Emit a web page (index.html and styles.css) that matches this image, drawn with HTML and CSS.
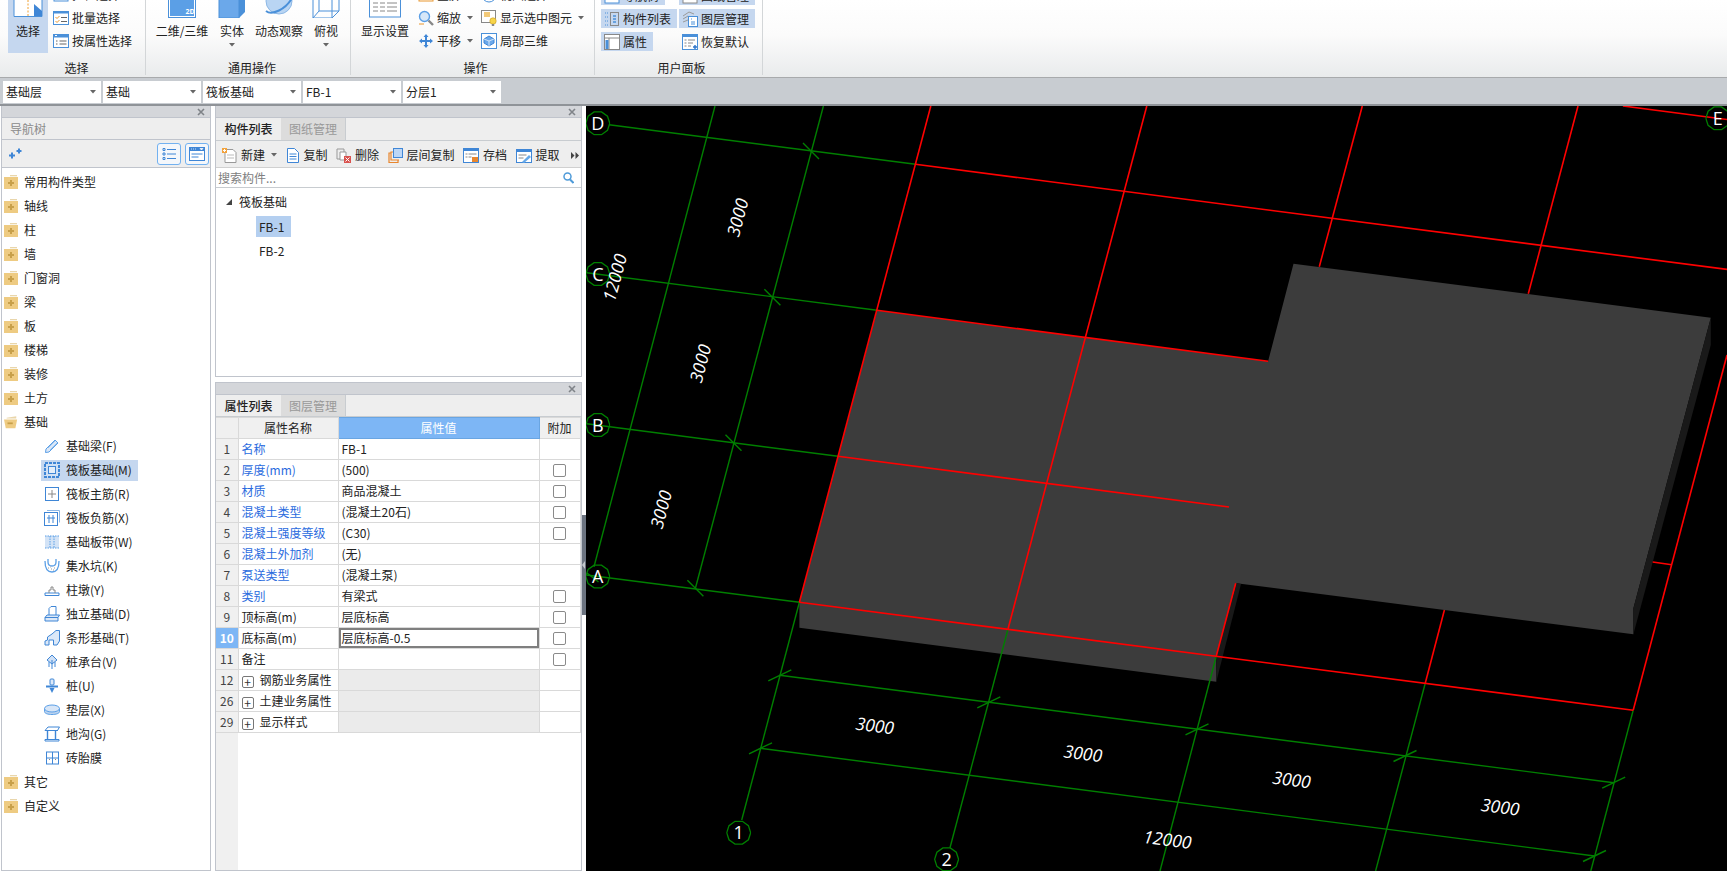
FILE: index.html
```html
<!DOCTYPE html>
<html lang="zh-CN">
<head>
<meta charset="utf-8">
<title>筏板基础</title>
<link rel="stylesheet" href="styles.css">
</head>
<body>
<svg class="defs" width="0" height="0" aria-hidden="true">
  <symbol id="folder" viewBox="0 0 14 14"><rect x="6" y="0" width="7" height="1.3" fill="#e9d6ab"/><rect x="0" y="2" width="14" height="12" fill="#eecb82"/><rect x="6" y="5" width="2" height="6" fill="#c8a04a"/><rect x="4" y="7" width="6" height="2" fill="#c8a04a"/></symbol>
  <symbol id="folder-open" viewBox="0 0 16 14"><path d="M3 2L14 0.5V3H3z" fill="#e9d6ab"/><path d="M0 4H15L13 14H2z" fill="#eecb82"/><rect x="4" y="7.5" width="6" height="2" fill="#c8a04a"/></symbol>
  <symbol id="x" viewBox="0 0 8 8"><path d="M1 1L7 7M7 1L1 7" stroke="#7f8388" stroke-width="1.6" fill="none"/></symbol>
  <symbol id="bubble" viewBox="-12.5 -12.5 25 25"><polygon points="12,0 9.7,7.1 3.7,11.4 -3.7,11.4 -9.7,7.1 -12,0 -9.7,-7.1 -3.7,-11.4 3.7,-11.4 9.7,-7.1" fill="none" stroke="#007f00" stroke-width="1.3"/></symbol>
  <symbol id="caret" viewBox="0 0 6 4"><path d="M0 0H6L3 3.5z" fill="#666"/></symbol>
</svg>
<div class="app">
  <header class="ribbon">
    <section class="group g1">
      <div class="group-body">
        <div class="big big-active w40">
          <svg class="big-icon" width="30" height="18" viewBox="0 0 30 18"><path d="M1 0V16.5H29V0" fill="#fff" stroke="#4a90d9"/><path d="M15 0V16" stroke="#f0a030" stroke-dasharray="2 1.5"/><path d="M21 4L29 11V16H21z" fill="#3f86d6"/></svg>
          <span class="big-text">选择</span>
        </div>
        <div class="small-col sc1">
          <div class="small"><svg width="16" height="14" viewBox="0 0 16 14"><rect x="1" y="1" width="14" height="12" fill="#fff" stroke="#4a90d9"/></svg><span>拉框选择</span></div>
          <div class="small"><svg width="16" height="14" viewBox="0 0 16 14"><rect x=".5" y=".5" width="15" height="13" fill="#fff" stroke="#4a90d9"/><rect x="0" y="0" width="16" height="2.5" fill="#4a90d9"/><path d="M2.5 6l1.5 1.5L6.5 5M2.5 10l1.5 1.5L6.5 9" stroke="#e8962e" fill="none"/><path d="M8 6.5h6M8 10.5h6" stroke="#666"/></svg><span>批量选择</span></div>
          <div class="small"><svg width="16" height="14" viewBox="0 0 16 14"><rect x=".5" y=".5" width="15" height="13" fill="#fff" stroke="#4a90d9"/><rect x="0" y="0" width="16" height="3.5" fill="#4a90d9"/><rect x="2" y="1" width="2" height="1" fill="#fff"/><path d="M3 7h1.5M3 10h1.5M6.5 7h7M6.5 10h7" stroke="#666"/></svg><span>按属性选择</span></div>
        </div>
      </div>
      <div class="group-label">选择</div>
    </section>
    <section class="group g2">
      <div class="group-body">
        <div class="big w56">
          <svg class="big-icon" width="28" height="18" viewBox="0 0 28 18"><rect x=".5" y="-2" width="27" height="19.5" fill="#fff" stroke="#4a90d9"/><rect x="2" y="-2" width="24" height="18" fill="#5b9fe6"/><text class="tiny2d" x="22" y="14" text-anchor="middle">2D</text></svg>
          <span class="big-text">二维/三维</span>
        </div>
        <div class="big w44">
          <svg class="big-icon" width="28" height="18" viewBox="0 0 28 18"><path d="M1 -2H21V18H1z" fill="#6ba8ea" stroke="#4a90d9"/><path d="M21 -2L27 -6V12L21 18z" fill="#4a90d9"/></svg>
          <span class="big-text">实体</span>
          <svg class="big-caret" width="6" height="4"><use href="#caret"/></svg>
        </div>
        <div class="big w50">
          <svg class="big-icon" width="30" height="18" viewBox="0 0 30 18"><circle cx="15" cy="1" r="13" fill="#b9d5f3" stroke="#8db8e6"/><path d="M2 11C8 16 22 9 28 -2" stroke="#4a90d9" stroke-width="2" fill="none"/></svg>
          <span class="big-text">动态观察</span>
        </div>
        <div class="big w44">
          <svg class="big-icon" width="28" height="18" viewBox="0 0 28 18"><path d="M1 -2H20V18H1zM20 18L27 11V-8M7 -8V11H27M1 18L7 11" fill="none" stroke="#4a90d9"/></svg>
          <span class="big-text">俯视</span>
          <svg class="big-caret" width="6" height="4"><use href="#caret"/></svg>
        </div>
      </div>
      <div class="group-label">通用操作</div>
    </section>
    <section class="group g3">
      <div class="group-body">
        <div class="big w56">
          <svg class="big-icon" width="32" height="18" viewBox="0 0 32 18"><rect x=".5" y="-3" width="31" height="20" fill="#fff" stroke="#4a90d9"/><path d="M4 3h5M11 3h5M18 3h10M4 7h5M11 7h5M18 7h10M4 11h5M11 11h5M18 11h10" stroke="#888"/></svg>
          <span class="big-text">显示设置</span>
        </div>
        <div class="small-col sc2">
          <div class="small"><svg width="16" height="14" viewBox="0 0 16 14"><rect x="1" y="1" width="14" height="12" fill="#fff" stroke="#e8962e"/></svg><span>全屏</span></div>
          <div class="small"><svg width="16" height="16" viewBox="0 0 16 16"><circle cx="6.5" cy="6.5" r="5" fill="#d6e7f8" stroke="#5b9fe6" stroke-width="1.4"/><path d="M10.5 10.5L15 15" stroke="#888" stroke-width="2.4"/><path d="M1 14h5" stroke="#e8962e"/></svg><span>缩放</span><svg class="small-caret" width="6" height="4"><use href="#caret"/></svg></div>
          <div class="small"><svg width="16" height="16" viewBox="0 0 16 16"><path d="M8 1L10.5 4H9V7H12V5.500L15 8L12 10.500V9H9V12H10.500L8 15L5.500 12H7V9H4V10.500L1 8L4 5.500V7H7V4H5.500z" fill="#3f86d6"/></svg><span>平移</span><svg class="small-caret" width="6" height="4"><use href="#caret"/></svg></div>
        </div>
        <div class="small-col sc3">
          <div class="small"><svg width="16" height="16" viewBox="0 0 16 16"><circle cx="8" cy="8" r="7" fill="#fff" stroke="#4a90d9"/></svg><span>视图选择</span></div>
          <div class="small"><svg width="16" height="16" viewBox="0 0 16 16"><rect x=".5" y=".5" width="14" height="12" fill="#fff" stroke="#888"/><rect x="3" y="2" width="6" height="5" fill="#f2c979"/><circle cx="12" cy="11" r="3.200" fill="#f7d54a" stroke="#c99a20" stroke-width=".6"/><rect x="10.800" y="14" width="2.400" height="2" fill="#888"/></svg><span>显示选中图元</span><svg class="small-caret" width="6" height="4"><use href="#caret"/></svg></div>
          <div class="small"><svg width="16" height="16" viewBox="0 0 16 16"><rect x=".5" y=".5" width="15" height="15" fill="#fff" stroke="#4a90d9"/><path d="M8 3L13 6V10L8 13L3 10V6z" fill="#6ba8ea" stroke="#3f86d6"/><path d="M8 8V13M3 6L8 8L13 6" stroke="#fff" stroke-width=".7" fill="none"/></svg><span>局部三维</span></div>
        </div>
      </div>
      <div class="group-label">操作</div>
    </section>
    <section class="group g4">
      <div class="group-body">
        <div class="panel-grid">
          <div class="pbtn pbtn-on pw64"><svg width="16" height="16" viewBox="0 0 16 16"><rect x="1" y="1" width="14" height="14" fill="#fff" stroke="#4a90d9"/></svg><span>导航树</span></div>
          <div class="pbtn pbtn-on"><svg width="16" height="16" viewBox="0 0 16 16"><rect x="1" y="1" width="14" height="14" fill="#fff" stroke="#888"/></svg><span>图纸管理</span></div>
          <div class="pbtn pbtn-on"><svg width="16" height="16" viewBox="0 0 16 16"><path d="M1 2h3M1 6h3M1 10h3M1 14h3" stroke="#4a90d9" stroke-dasharray="1 1"/><rect x="6.500" y="1.500" width="8" height="13" fill="none" stroke="#888"/><path d="M9 5h3M9 8h3M9 11h3" stroke="#4a90d9" stroke-width="1.400"/></svg><span>构件列表</span></div>
          <div class="pbtn pbtn-on"><svg width="16" height="16" viewBox="0 0 16 16"><path d="M1 5l6-4 5 2M1 8l5-3M1 11l5-2" stroke="#999" fill="none"/><rect x="6.500" y="5.500" width="9" height="10" fill="#fff" stroke="#4a90d9"/><path d="M9 8h1M9 11h4M9 13h4" stroke="#4a90d9"/></svg><span>图层管理</span></div>
          <div class="pbtn pbtn-on pw52"><svg width="16" height="16" viewBox="0 0 16 16"><rect x=".5" y=".5" width="15" height="15" fill="#fff" stroke="#888"/><path d="M1 4h14M5 4v11" stroke="#888"/><rect x="1.500" y="6" width="3" height="9" fill="#4a90d9"/></svg><span>属性</span></div>
          <div class="pbtn"><svg width="16" height="16" viewBox="0 0 16 16"><rect x=".5" y=".5" width="15" height="15" fill="#fff" stroke="#4a90d9"/><rect x="0" y="0" width="16" height="3" fill="#4a90d9"/><path d="M2.500 6h2M6 6h7M2.500 9h2M6 9h5M2.500 12h2M6 12h3" stroke="#888"/><path d="M11 13h4M13 11v4" stroke="#2f74c8" stroke-width="1.400"/></svg><span>恢复默认</span></div>
        </div>
      </div>
      <div class="group-label">用户面板</div>
    </section>
  </header>

  <div class="selectors">
    <div class="combo"><span>基础层</span><svg width="6" height="4"><use href="#caret"/></svg></div>
    <div class="combo"><span>基础</span><svg width="6" height="4"><use href="#caret"/></svg></div>
    <div class="combo"><span>筏板基础</span><svg width="6" height="4"><use href="#caret"/></svg></div>
    <div class="combo"><span>FB-1</span><svg width="6" height="4"><use href="#caret"/></svg></div>
    <div class="combo"><span>分层1</span><svg width="6" height="4"><use href="#caret"/></svg></div>
  </div>

  <main class="main">
    <aside class="panel nav">
      <div class="panel-head"><svg width="8" height="8"><use href="#x"/></svg></div>
      <div class="nav-title">导航树</div>
      <div class="nav-tools">
        <svg class="sparkle" width="13" height="11" viewBox="0 0 13 11"><path d="M0 7.500h6M3 4.500v6" stroke="#3f86d6" stroke-width="2"/><path d="M7.500 3h5M10 .5v5" stroke="#3f86d6" stroke-width="2"/></svg>
        <div class="nav-btns">
          <div class="nav-btn"><svg width="14" height="14" viewBox="0 0 14 14"><path d="M1 1.500h2v2H1zM1 6h2v2H1zM1 10.500h2v2H1z" fill="none" stroke="#3f86d6"/><path d="M5 2.500h9M5 7h9M5 11.500h9" stroke="#3f86d6"/></svg></div>
          <div class="nav-btn"><svg width="16" height="14" viewBox="0 0 16 14"><rect x=".5" y=".5" width="15" height="13" fill="#fff" stroke="#3f86d6"/><rect x="0" y="0" width="16" height="4" fill="#3f86d6"/><path d="M2 2h1M4 2h1M6 2h1M11 1.500h3L12.500 3z" stroke="#fff" stroke-width=".7" fill="#fff"/><path d="M2.500 7h11M2.500 10h7" stroke="#3f86d6"/></svg></div>
        </div>
      </div>
      <div class="nav-tree">
        <div class="node"><svg width="14" height="14"><use href="#folder"/></svg><span>常用构件类型</span></div>
        <div class="node"><svg width="14" height="14"><use href="#folder"/></svg><span>轴线</span></div>
        <div class="node"><svg width="14" height="14"><use href="#folder"/></svg><span>柱</span></div>
        <div class="node"><svg width="14" height="14"><use href="#folder"/></svg><span>墙</span></div>
        <div class="node"><svg width="14" height="14"><use href="#folder"/></svg><span>门窗洞</span></div>
        <div class="node"><svg width="14" height="14"><use href="#folder"/></svg><span>梁</span></div>
        <div class="node"><svg width="14" height="14"><use href="#folder"/></svg><span>板</span></div>
        <div class="node"><svg width="14" height="14"><use href="#folder"/></svg><span>楼梯</span></div>
        <div class="node"><svg width="14" height="14"><use href="#folder"/></svg><span>装修</span></div>
        <div class="node"><svg width="14" height="14"><use href="#folder"/></svg><span>土方</span></div>
        <div class="node"><svg width="14" height="14"><use href="#folder-open"/></svg><span>基础</span></div>
        <div class="leaf"><svg width="16" height="16" viewBox="0 0 16 16"><path d="M2 11L11 2L14 5L5 14L1.500 14.500z" fill="#dbe8f8" stroke="#5b9fe6"/><path d="M4 10L11 3M6 12L13 5" stroke="#5b9fe6" stroke-width=".6"/></svg><span>基础梁(F)</span></div>
        <div class="leaf leaf-on"><svg width="16" height="16" viewBox="0 0 16 16"><rect x="1" y="1" width="14" height="14" fill="#cfe0f5" stroke="#3f86d6" stroke-width="2" stroke-dasharray="3 1"/><rect x="4.500" y="4.500" width="7" height="7" fill="#e4eefa" stroke="#3f86d6"/></svg><span>筏板基础(M)</span></div>
        <div class="leaf"><svg width="16" height="16" viewBox="0 0 16 16"><rect x="1.500" y="1.500" width="13" height="13" fill="#fff" stroke="#3f86d6"/><path d="M8 4v8M4 8h8" stroke="#888"/></svg><span>筏板主筋(R)</span></div>
        <div class="leaf"><svg width="16" height="16" viewBox="0 0 16 16"><path d="M3 .5h12.500v12" fill="none" stroke="#8db8e6"/><rect x=".5" y="2.500" width="13" height="13" fill="#fff" stroke="#3f86d6"/><path d="M5 5v8M9 5v8M3 8h8" stroke="#3f86d6"/></svg><span>筏板负筋(X)</span></div>
        <div class="leaf"><svg width="16" height="16" viewBox="0 0 16 16"><rect x="1" y="2" width="14" height="12" fill="#d3e3f6"/><path d="M1 2h14M1 14h14M6 2v12M10 2v12" stroke="#5b9fe6" stroke-dasharray="1.500 1"/></svg><span>基础板带(W)</span></div>
        <div class="leaf"><svg width="16" height="16" viewBox="0 0 16 16"><path d="M1 3c0 8 3 11 7 11s7-3 7-11" fill="none" stroke="#5b9fe6" stroke-width="1.300"/><path d="M4 1v3c0 3 2 4 4 4s4-1 4-4V1" fill="none" stroke="#5b9fe6" stroke-width="1.300"/><path d="M4 10h1M7 11h1M10 10h1M6 9h.7M9 12h1" stroke="#999"/></svg><span>集水坑(K)</span></div>
        <div class="leaf"><svg width="16" height="16" viewBox="0 0 16 16"><path d="M1 11h14v2.500H1z" fill="#fff" stroke="#3f86d6"/><path d="M5 11V8h2V5h2v3h2v3" fill="none" stroke="#888"/></svg><span>柱墩(Y)</span></div>
        <div class="leaf"><svg width="16" height="16" viewBox="0 0 16 16"><path d="M5 9V2.500L7 .5h5V9" fill="#fff" stroke="#3f86d6"/><path d="M1 11.500L3 9h12.500l-1.500 2.500V15H1z" fill="#dbe8f8" stroke="#3f86d6"/><path d="M1 11.500H14" stroke="#3f86d6"/></svg><span>独立基础(D)</span></div>
        <div class="leaf"><svg width="16" height="16" viewBox="0 0 16 16"><path d="M1 15V11l2.500-1V7L8 4l4-3.500h3.500V11L13 15H9.500V10H5v5z" fill="#dbe8f8" stroke="#3f86d6"/></svg><span>条形基础(T)</span></div>
        <div class="leaf"><svg width="16" height="16" viewBox="0 0 16 16"><path d="M8 1L13 6L8 10L3 6z" fill="#cfe0f5" stroke="#3f86d6"/><path d="M8 6v9M5 8v5M11 8v5" stroke="#3f86d6"/></svg><span>桩承台(V)</span></div>
        <div class="leaf"><svg width="16" height="16" viewBox="0 0 16 16"><rect x="6" y="1" width="4" height="6" rx="1" fill="#dbe8f8" stroke="#3f86d6"/><path d="M2 8.500h12" stroke="#3f86d6" stroke-width="2"/><path d="M5.500 10h5L8 15z" fill="#3f86d6"/></svg><span>桩(U)</span></div>
        <div class="leaf"><svg width="16" height="16" viewBox="0 0 16 16"><path d="M.5 6.500v3c0 2 3.500 3 7.500 3s7.500-1 7.500-3v-3" fill="#bcd4f0" stroke="#5b9fe6"/><ellipse cx="8" cy="6.500" rx="7.500" ry="3.500" fill="#d8e6f7" stroke="#5b9fe6"/></svg><span>垫层(X)</span></div>
        <div class="leaf"><svg width="16" height="16" viewBox="0 0 16 16"><path d="M1 4.500L4 1h11.500l-2 3.500z" fill="#fff" stroke="#3f86d6"/><path d="M1 15h14v-1.500H1zM1 4.500h13" fill="none" stroke="#3f86d6"/><path d="M3.500 4.500v9M11.500 4.500v9" stroke="#3f86d6" stroke-width="1.400"/></svg><span>地沟(G)</span></div>
        <div class="leaf"><svg width="16" height="16" viewBox="0 0 16 16"><rect x="2.500" y="2" width="12" height="12" fill="#fff" stroke="#3f86d6"/><path d="M8.500 2v12M2.500 8h12" stroke="#3f86d6"/><path d="M5 9.500h1M11 9.500h1" stroke="#888"/></svg><span>砖胎膜</span></div>
        <div class="node"><svg width="14" height="14"><use href="#folder"/></svg><span>其它</span></div>
        <div class="node"><svg width="14" height="14"><use href="#folder"/></svg><span>自定义</span></div>
      </div>
    </aside>

    <div class="middle">
      <section class="panel list-panel">
        <div class="panel-head"><svg width="8" height="8"><use href="#x"/></svg></div>
        <div class="tabs"><div class="tab tab-on">构件列表</div><div class="tab">图纸管理</div></div>
        <div class="list-tools">
          <div class="tool t-new"><svg width="15" height="15" viewBox="0 0 15 15"><path d="M3 1.500h8l3 3v10H3z" fill="#fff" stroke="#999"/><path d="M5 7h7M5 10h7" stroke="#bbb"/><rect x="0" y="0" width="5" height="5" fill="#f2a23c"/><path d="M1 2.500h3M2.500 1v3" stroke="#fff"/></svg><span>新建</span><svg class="tool-caret" width="6" height="4"><use href="#caret"/></svg></div>
          <div class="tool"><svg width="14" height="15" viewBox="0 0 14 15"><path d="M1.500.5h7l4 4v10h-11z" fill="#fff" stroke="#3f86d6"/><path d="M3.500 6h7M3.500 8.500h7M3.500 11h7" stroke="#3f86d6"/></svg><span>复制</span></div>
          <div class="tool"><svg width="15" height="15" viewBox="0 0 15 15"><path d="M1 1h7v10H1z" fill="none" stroke="#999"/><path d="M4 4h6v8H4z" fill="#fff" stroke="#999"/><rect x="8" y="8" width="7" height="7" fill="#d9534f"/><path d="M9.500 9.500l4 4M13.500 9.500l-4 4" stroke="#fff"/></svg><span>删除</span></div>
          <div class="tool"><svg width="15" height="15" viewBox="0 0 15 15"><path d="M3 5H1v9.500h9V12" fill="none" stroke="#e8862e" stroke-width="1.200"/><path d="M6 3H4v8h8" fill="none" stroke="#e8862e" stroke-width="1.200" transform="translate(-1 1)"/><rect x="5.500" y=".5" width="9" height="9" fill="#bcd6f5" stroke="#3f86d6"/></svg><span>层间复制</span></div>
          <div class="tool"><svg width="16" height="15" viewBox="0 0 16 15"><rect x=".5" y=".5" width="15" height="14" fill="#fff" stroke="#3f86d6"/><rect x="0" y="0" width="16" height="3" fill="#3f86d6"/><path d="M2.500 6h2M5.500 6h8M2.500 9h2M5.500 9h3" stroke="#888"/><rect x="9" y="9" width="6" height="5" fill="#e8862e"/></svg><span>存档</span></div>
          <div class="tool"><svg width="16" height="15" viewBox="0 0 16 15"><rect x=".5" y="1.500" width="15" height="13" fill="#fff" stroke="#3f86d6"/><rect x="0" y="1" width="16" height="3" fill="#3f86d6"/><path d="M2.500 7h8M2.500 10h5" stroke="#888"/><path d="M6 14l7-7 2 2-7 6z" fill="#66a8e8"/></svg><span>提取</span></div>
          <svg class="more" width="8" height="7" viewBox="0 0 8 7"><path d="M0 0L3.500 3.500L0 7zM4.500 0L8 3.500L4.500 7z" fill="#444"/></svg>
        </div>
        <div class="search"><span>搜索构件...</span><svg width="11" height="12" viewBox="0 0 11 12"><circle cx="4.500" cy="4.500" r="3.500" fill="none" stroke="#4f9bd9" stroke-width="1.500"/><path d="M7 7.500L10.500 11" stroke="#4f9bd9" stroke-width="2"/></svg></div>
        <div class="list-tree">
          <div class="list-root"><svg width="6" height="6" viewBox="0 0 6 6"><path d="M6 0V6H0z" fill="#444"/></svg><span>筏板基础</span></div>
          <div class="list-item"><span class="item-on">FB-1</span></div>
          <div class="list-item"><span>FB-2</span></div>
        </div>
      </section>

      <section class="panel prop-panel">
        <div class="panel-head"><svg width="8" height="8"><use href="#x"/></svg></div>
        <div class="tabs prop-tabs"><div class="tab tab-on">属性列表</div><div class="tab">图层管理</div></div>
        <table class="props">
          <colgroup><col class="c-idx"><col class="c-name"><col class="c-val"><col class="c-add"></colgroup>
          <thead><tr><th class="idx"></th><th>属性名称</th><th class="val-head">属性值</th><th>附加</th></tr></thead>
          <tbody>
            <tr><td class="idx">1</td><td class="blue">名称</td><td>FB-1</td><td></td></tr>
            <tr><td class="idx">2</td><td class="blue">厚度(mm)</td><td>(500)</td><td class="chk"><span class="box"></span></td></tr>
            <tr><td class="idx">3</td><td class="blue">材质</td><td>商品混凝土</td><td class="chk"><span class="box"></span></td></tr>
            <tr><td class="idx">4</td><td class="blue">混凝土类型</td><td>(混凝土20石)</td><td class="chk"><span class="box"></span></td></tr>
            <tr><td class="idx">5</td><td class="blue">混凝土强度等级</td><td>(C30)</td><td class="chk"><span class="box"></span></td></tr>
            <tr><td class="idx">6</td><td class="blue">混凝土外加剂</td><td>(无)</td><td></td></tr>
            <tr><td class="idx">7</td><td class="blue">泵送类型</td><td>(混凝土泵)</td><td></td></tr>
            <tr><td class="idx">8</td><td class="blue">类别</td><td>有梁式</td><td class="chk"><span class="box"></span></td></tr>
            <tr><td class="idx">9</td><td>顶标高(m)</td><td>层底标高</td><td class="chk"><span class="box"></span></td></tr>
            <tr><td class="idx idx-on">10</td><td>底标高(m)</td><td class="editing">层底标高-0.5</td><td class="chk"><span class="box"></span></td></tr>
            <tr><td class="idx">11</td><td>备注</td><td></td><td class="chk"><span class="box"></span></td></tr>
            <tr><td class="idx">12</td><td><span class="plus">+</span>钢筋业务属性</td><td class="shade"></td><td></td></tr>
            <tr><td class="idx">26</td><td><span class="plus">+</span>土建业务属性</td><td class="shade"></td><td></td></tr>
            <tr><td class="idx">29</td><td><span class="plus">+</span>显示样式</td><td class="shade"></td><td></td></tr>
          </tbody>
        </table>
        <div class="props-rest"><div class="rest-idx"></div></div>
      </section>
    </div>

    <div class="splitter"><div class="handle"></div></div>

    <div class="canvas">
      <svg class="cad" width="1141" height="765" viewBox="586 106 1141 765">
        <polygon class="slab" points="877,310.300 1268.100,361.300 1293.500,263.700 1710.800,317.700 1633.400,608.300 1633.400,634.300 1236.500,583.300 1216.300,656 1216.300,681.700 799.400,627.700 799.400,602.300"/>
        <polygon class="side" points="1710.800,317.700 1710.800,345 1633.400,634.300 1633.400,608.300"/>
        <polygon class="side" points="1236.500,583.300 1241,584 1216.300,681.700 1216.300,656"/>

        <g class="green">
          <line x1="609" y1="124.700" x2="915.500" y2="164.300"/>
          <line x1="586.700" y1="272.700" x2="877" y2="310.300"/>
          <line x1="586.700" y1="423.700" x2="838" y2="456.300"/>
          <line x1="586.700" y1="575" x2="799.400" y2="602.300"/>
          <line x1="799.400" y1="602.300" x2="741.700" y2="820"/>
          <line x1="1008" y1="629" x2="950" y2="847.700"/>
          <line x1="1216.300" y1="656" x2="1160" y2="871"/>
          <line x1="1425.300" y1="683" x2="1375.600" y2="871"/>
          <line x1="1633.200" y1="710.300" x2="1590.800" y2="871"/>
          <line x1="823.400" y1="106" x2="695.400" y2="588.300"/>
          <line x1="715" y1="106" x2="594" y2="566.700"/>
          <line x1="779.800" y1="675.300" x2="1613.700" y2="782.700"/>
          <line x1="760.500" y1="748.300" x2="1594.500" y2="856"/>
          <path d="M803 143L819 159M764.400 289.300L780.400 305.300M725.500 434.700L741.500 450.700M687.400 580.300L703.400 596.300M587 573L598.500 582"/>
          <path d="M768.300 680.800L791.300 669.800M977.300 707.800L1000.300 696.800M1185.500 734.800L1208.500 723.800M1393.500 761.500L1416.500 750.500M1602.200 788.200L1625.200 777.200M749 753.800L772 742.800M1583 861.500L1606 850.500"/>
        </g>
        <g class="red">
          <line x1="915.500" y1="164.300" x2="1727" y2="269.400"/>
          <line x1="877" y1="310.300" x2="1268.100" y2="361.300"/>
          <line x1="838" y1="456.300" x2="1229" y2="507"/>
          <line x1="799.400" y1="602.300" x2="1633.200" y2="710.300"/>
          <line x1="1622.900" y1="106" x2="1727" y2="119.500"/>
          <line x1="1652.700" y1="562" x2="1671.800" y2="564.700"/>
          <line x1="799.400" y1="602.300" x2="930.800" y2="106"/>
          <line x1="1008" y1="629" x2="1146.800" y2="106"/>
          <line x1="1216.300" y1="656" x2="1235.700" y2="583.300"/>
          <line x1="1319.300" y1="266.700" x2="1362.300" y2="106"/>
          <line x1="1425.300" y1="683" x2="1444.400" y2="610"/>
          <line x1="1528.300" y1="293.700" x2="1578" y2="106"/>
          <line x1="1633.200" y1="710.300" x2="1727" y2="355"/>
        </g>

        <use href="#bubble" x="585.300" y="110.800" width="25" height="25"/>
        <use href="#bubble" x="585.300" y="261.500" width="25" height="25"/>
        <use href="#bubble" x="585.300" y="412.500" width="25" height="25"/>
        <use href="#bubble" x="585.300" y="564" width="25" height="25"/>
        <use href="#bubble" x="1705.300" y="105.800" width="25" height="25"/>
        <use href="#bubble" x="726.200" y="820.200" width="25" height="25"/>
        <use href="#bubble" x="934.100" y="846.800" width="25" height="25"/>

        <g class="axis-label">
          <text x="597.800" y="130">D</text>
          <text x="597.800" y="280.500">C</text>
          <text x="597.800" y="431.500">B</text>
          <text x="597.800" y="583">A</text>
          <text x="1717.800" y="125">E</text>
          <text x="738.700" y="839">1</text>
          <text x="946.600" y="865.500">2</text>
        </g>
        <g class="dim">
          <text transform="translate(737 217.300) rotate(-75)">3000</text>
          <text transform="translate(699.800 363.300) rotate(-75)">3000</text>
          <text transform="translate(660.400 509.300) rotate(-75)">3000</text>
          <text transform="translate(614.300 277.300) rotate(-75)">12000</text>
          <text transform="translate(874.900 725) rotate(7.400)">3000</text>
          <text transform="translate(1083 752.700) rotate(7.400)">3000</text>
          <text transform="translate(1291.700 779) rotate(7.400)">3000</text>
          <text transform="translate(1500.300 806.300) rotate(7.400)">3000</text>
          <text transform="translate(1167.500 839) rotate(7.400)">12000</text>
        </g>
      </svg>
    </div>
  </main>
</div>
</body>
</html>
```
FILE: styles.css
```css
* { box-sizing: border-box; }
html, body { margin: 0; padding: 0; height: 100%; overflow: hidden; }
body {
  font-family: "Noto Sans CJK SC", "Open Sans", sans-serif;
  font-size: 12px;
  line-height: 16px;
  color: #222;
  background: #fff;
}
svg { display: block; flex: none; overflow: hidden; }
.defs { position: absolute; }
.app { width: 1727px; height: 871px; display: flex; flex-direction: column; }

/* ribbon */
.ribbon {
  height: 78px;
  flex: none;
  display: flex;
  overflow: hidden;
  background: linear-gradient(#ffffff 0%, #fbfbfb 45%, #e9ebec 100%);
  border-bottom: 1px solid #a8aaac;
}
.group { height: 75px; flex: none; display: flex; flex-direction: column; border-right: 1px solid #d3d6d8; }
.group-body { height: 60px; flex: none; display: flex; align-items: flex-start; }
.group-label { height: 15px; line-height: 15px; text-align: center; }
.g1 { width: 146px; padding-left: 8px; }
.g2 { width: 205px; padding-left: 8px; }
.g3 { width: 244px; padding-left: 6px; }
.g4 { width: 168px; padding-left: 6px; }

.big { height: 53px; flex: none; display: flex; flex-direction: column; align-items: center; }
.big-active { background: #c5d7ef; }
.big-icon { height: 18px; margin-bottom: 5px; }
.big-text { line-height: 16px; white-space: nowrap; }
.big-caret { margin-top: 4px; }
.w40 { width: 40px; }
.w44 { width: 44px; }
.w50 { width: 50px; }
.w56 { width: 56px; }

.small-col { display: flex; flex-direction: column; margin-top: -17px; flex: none; }
.sc1 { margin-left: 5px; }
.sc2 { margin-left: 5px; width: 63px; }
.sc3 { width: 110px; }
.small { height: 23px; display: flex; align-items: center; gap: 3px; white-space: nowrap; }
.small-caret { margin-left: 3px; }

.panel-grid { display: grid; grid-template-columns: 76px 76px; grid-auto-rows: 19px; column-gap: 2px; row-gap: 4px; margin-top: -14px; }
.pbtn { display: flex; align-items: center; gap: 3px; padding-left: 3px; white-space: nowrap; }
.pbtn-on { background: #c5d7ef; }
.pw64 { width: 64px; }
.pw52 { width: 52px; }
.tiny2d { font-family: "Open Sans", sans-serif; font-size: 7px; font-weight: 700; fill: #fff; }

/* selectors */
.selectors {
  height: 28px;
  flex: none;
  display: flex;
  gap: 2px;
  padding: 3px 0 0 3px;
  background: #c8ccd1;
  border-bottom: 2px solid #8f9398;
}
.combo { width: 98px; height: 22px; background: #fff; display: flex; align-items: center; justify-content: space-between; padding: 0 5px 0 3px; line-height: 22px; }

/* main area */
.main { flex: 1; min-height: 0; display: flex; background: #fff; }
.panel { border: 1px solid #c0c4cc; border-top: 0; background: #fff; }
.panel-head { height: 12px; background: #d4d6da; border-bottom: 1px solid #c0c4cc; display: flex; justify-content: flex-end; align-items: center; padding-right: 5px; }
.nav { width: 210px; margin-left: 1px; flex: none; }
.nav-title { height: 22px; line-height: 21px; padding-left: 8px; background: #eeeeee; color: #8a8a8a; border-bottom: 1px solid #c0c4cc; }
.nav-tools { height: 28px; display: flex; align-items: center; justify-content: space-between; background: #eeeeee; border-bottom: 1px solid #c0c4cc; padding-left: 6px; padding-right: 1px; }
.sparkle { margin-left: 1px; }
.nav-btns { display: flex; gap: 4px; }
.nav-btn { width: 24px; height: 22px; border: 1px solid #72b1f0; border-radius: 3px; display: flex; align-items: center; justify-content: center; background: #f4f7fb; }
.nav-tree { padding-top: 2px; display: flex; flex-direction: column; }
.node { height: 24px; flex: none; display: flex; align-items: center; gap: 6px; padding-left: 2px; white-space: nowrap; }
.leaf { height: 21px; flex: none; width: 97px; margin: 1.5px 0 1.5px 39px; padding-left: 3px; display: flex; align-items: center; gap: 6px; white-space: nowrap; }
.leaf-on { background: #c5d7ef; }

.middle { width: 367px; margin-left: 4px; flex: none; display: flex; flex-direction: column; }
.list-panel { height: 271px; flex: none; border-bottom: 1px solid #c0c4cc; }
.prop-panel { flex: 1; min-height: 0; margin-top: 5px; border-top: 1px solid #c0c4cc; display: flex; flex-direction: column; }
.tabs { height: 23px; display: flex; background: #eeeeee; border-bottom: 1px solid #c8ccd0; flex: none; }
.prop-tabs { height: 22px; }
.tab { width: 65px; text-align: center; line-height: 22px; color: #999; background: #dcdcdc; border-right: 1px solid #c8ccd0; }
.tab-on { background: #eeeeee; color: #222; font-weight: 500; border-right: 0; }
.list-tools { height: 27px; display: flex; align-items: center; gap: 8.5px; padding: 2px 0 0 6px; background: #eeeeee; border-bottom: 1px solid #d0d0d0; }
.tool { display: flex; align-items: center; gap: 4px; white-space: nowrap; }
.tool-caret { margin-left: 2px; }
.more { margin-left: 3px; }
.search { height: 20px; display: flex; align-items: center; justify-content: space-between; padding: 0 7px 0 2px; border-bottom: 1px solid #c8ccd0; color: #808080; }
.list-tree { padding-top: 2px; }
.list-root { height: 24px; display: flex; align-items: center; gap: 7px; padding-left: 10px; }
.list-item { height: 24px; display: flex; align-items: center; padding-left: 40px; }
.list-item span { height: 21px; line-height: 21px; width: 35px; padding-left: 3px; }
.item-on { background: #b4cff0; }

/* property grid */
.props { width: 364px; table-layout: fixed; border-collapse: collapse; flex: none; }
.c-idx { width: 22px; }
.c-name { width: 100px; }
.c-val { width: 201px; }
.c-add { width: 41px; }
.props tr { height: 21px; }
.props th, .props td { border: 1px solid #d9d9d9; padding: 0 3px; height: 21px; font-weight: 400; white-space: nowrap; overflow: hidden; }
.props th { background: #f0f0f0; text-align: center; }
.props th:first-child, .props td:first-child { border-left: 0; }
.props th.val-head { background: #7db6f5; color: #fff; border: 1px solid #69a5e2; }
.props td.idx { background: #f0f0f0; text-align: center; color: #444; padding: 0; }
.props td.idx-on { background: #7db6f5; color: #fff; font-weight: 700; }
.props td.blue { color: #2a6bde; }
.props td.editing { box-shadow: inset 0 0 0 2px #7f7f7f; }
.props td.shade { background: #ebebeb; }
.chk { text-align: center; }
.box { display: block; width: 13px; height: 13px; margin: 0 auto; border: 1px solid #8a8a8a; border-radius: 2px; background: #fff; }
.plus { display: inline-block; width: 12px; height: 12px; line-height: 10px; text-align: center; border: 1px solid #777; border-radius: 2px; margin-right: 6px; vertical-align: -2px; color: #333; }
.props-rest { flex: 1; min-height: 0; }
.rest-idx { width: 22px; height: 100%; background: #f0f0f0; }

/* splitter */
.splitter { width: 4px; flex: none; padding-top: 409px; }
.handle { height: 100px; background: #6c7480; position: relative; }
.handle::after { content: ""; position: absolute; left: 0; top: 46px; border: 4px solid transparent; border-left-width: 0; border-right: 3px solid #c4c8cc; }

/* CAD canvas */
.canvas { flex: 1; min-width: 0; background: #000; overflow: hidden; }
.cad { background: #000; }
.slab { fill: #3c3c3c; }
.side { fill: #191919; }
.green line, .green path { stroke: #007f00; stroke-width: 1.4; fill: none; }
.red line { stroke: #f00; stroke-width: 1.6; }
.axis-label text { font-family: "Open Sans", sans-serif; font-size: 18px; fill: #fff; text-anchor: middle; }
.dim text { font-family: "Open Sans", sans-serif; font-style: italic; font-size: 17.5px; fill: #fff; text-anchor: middle; dominant-baseline: central; }
```
